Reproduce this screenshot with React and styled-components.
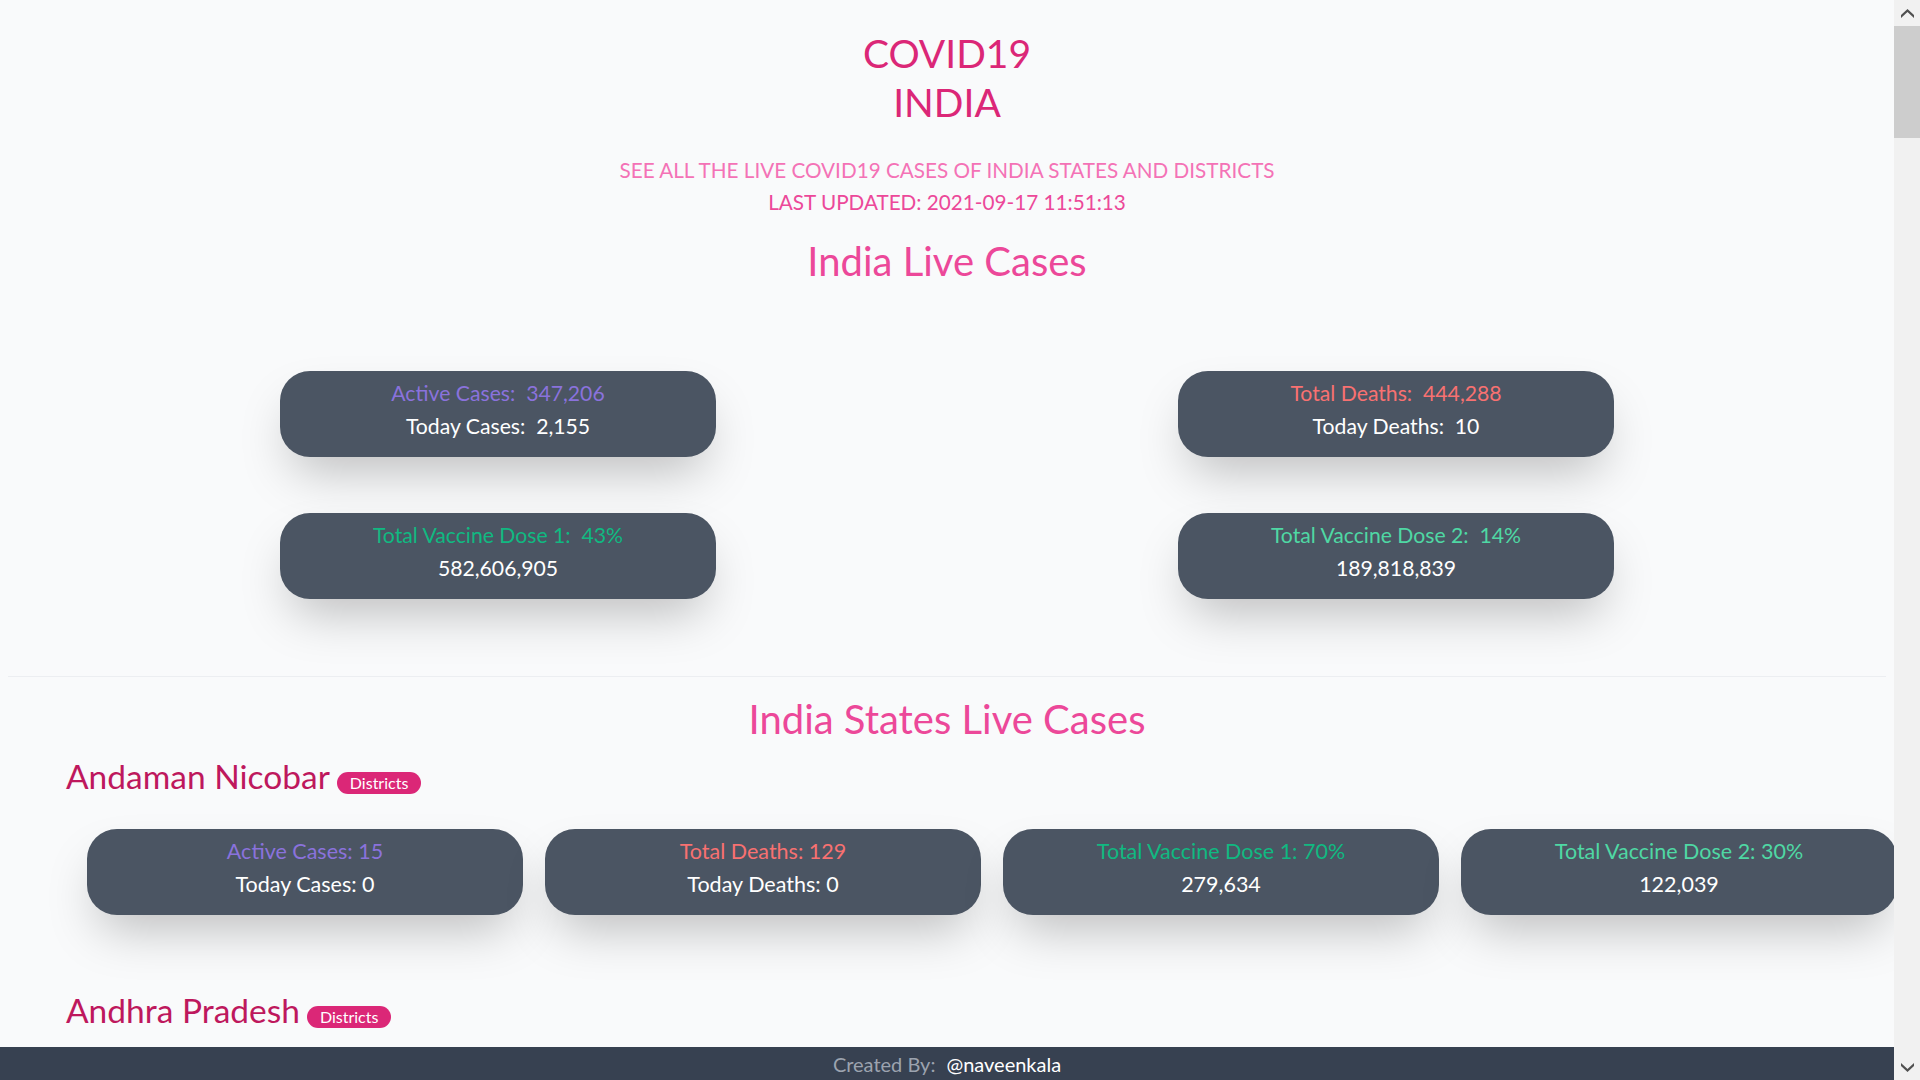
import React from "react";
import styled, { createGlobalStyle } from "styled-components";

const GlobalStyle = createGlobalStyle`
  html, body {
    margin: 0;
    padding: 0;
    height: 100%;
    overflow: hidden;
    background: #f9fafb;
    font-family: Lato, "Open Sans", sans-serif;
  }
  * { box-sizing: border-box; }
`;

const Shell = styled.div`
  display: flex;
  height: 100vh;
  width: 100vw;
`;

const Viewport = styled.div`
  flex: 1;
  min-width: 0;
  display: flex;
  flex-direction: column;
`;

const Scroller = styled.main`
  flex: 1;
  overflow: hidden;
  background: #f9fafb;
`;

const Header = styled.header`
  text-align: center;
  padding-top: 29px;
`;

const Title = styled.h1`
  margin: 0;
  font-size: 39px;
  line-height: 49px;
  font-weight: 400;
  color: #db2777;
`;

const Sub = styled.p`
  margin: 0;
  font-size: 20.7px;
  line-height: 32px;
  color: ${props => props.strong ? "#ec4899" : "#f472b6"};
`;

const SubBlock = styled.div`
  margin-top: 27px;
`;

const SectionTitle = styled.h2`
  margin: ${props => props.top || "0"} 0 0;
  text-align: center;
  font-size: 40px;
  line-height: 49px;
  font-weight: 400;
  color: #ec4899;
`;

const IndiaSection = styled.section`
  margin: 0 8px;
  padding-bottom: 77px;
  border-bottom: 1px solid #eceef1;
`;

const IndiaGrid = styled.div`
  display: grid;
  grid-template-columns: 1fr 1fr;
  justify-items: center;
  row-gap: 56px;
  margin-top: 85px;
  padding: 0 41px;
`;

const Card = styled.div`
  width: 436px;
  height: 86px;
  padding: 6px 0 14px;
  border-radius: 30px;
  background: #4b5563;
  box-shadow: 0 25px 50px -12px rgba(0, 0, 0, 0.25);
  text-align: center;
`;

const Line = styled.div`
  font-size: ${props => props.small ? "21.5px" : "21.2px"};
  line-height: 33px;
  white-space: pre;
  color: ${props => props.color || "#ffffff"};
`;

const StateBlock = styled.div`
  margin-top: ${props => props.first ? "10px" : "72.5px"};
`;

const StateName = styled.h3`
  margin: 0;
  padding-left: 66px;
  font-size: 33.5px;
  line-height: 45px;
  font-weight: 400;
  color: #be185d;
`;

const Badge = styled.span`
  display: inline-block;
  margin-left: 7px;
  padding: 0 13px;
  height: 22px;
  line-height: 22px;
  border-radius: 11px;
  background: #db2777;
  color: #ffffff;
  font-size: 16px;
`;

const StateRow = styled.div`
  display: grid;
  grid-template-columns: repeat(4, 436px);
  column-gap: 22px;
  margin-top: 30.5px;
  padding-left: 87px;
`;

const Footer = styled.footer`
  height: 33px;
  flex: none;
  display: flex;
  justify-content: center;
  align-items: center;
  gap: 11px;
  background: #374151;
  font-size: 20px;
  color: #9ca3af;
`;

const Handle = styled.span`
  color: #ffffff;
`;

const Track = styled.div`
  width: 26px;
  flex: none;
  display: flex;
  flex-direction: column;
  background: #f1f1f1;
`;

const Arrow = styled.div`
  height: 26px;
  display: flex;
  align-items: center;
  justify-content: center;
`;

const Thumb = styled.div`
  height: 112px;
  background: #cdcdcd;
`;

const Spacer = styled.div`
  flex: 1;
`;

const COLORS = {
  active: "#8a72dc",
  deaths: "#f87171",
  dose1: "#10b981",
  dose2: "#4fd8a4",
};

const india = [
  { color: COLORS.active, top: "Active Cases:  347,206", bottom: "Today Cases:  2,155" },
  { color: COLORS.deaths, top: "Total Deaths:  444,288", bottom: "Today Deaths:  10" },
  { color: COLORS.dose1, top: "Total Vaccine Dose 1:  43%", bottom: "582,606,905" },
  { color: COLORS.dose2, top: "Total Vaccine Dose 2:  14%", bottom: "189,818,839" },
];

// only the rows that are on screen carry their numbers
const states = [
  {
    name: "Andaman Nicobar",
    stats: {
      active: "15", today: "0", deaths: "129", todayDeaths: "0",
      dose1: "70%", dose1n: "279,634", dose2: "30%", dose2n: "122,039",
    },
  },
  { name: "Andhra Pradesh" },
];

const Stat = ({ color, top, bottom, small }) => (
  <Card>
    <Line color={color} small={small}>{top}</Line>
    <Line small={small}>{bottom}</Line>
  </Card>
);

const ArrowIcon = ({ down }) => (
  <svg width="13" height="9" viewBox="0 0 13 9">
    <polygon
      points={down ? "0,0 6.5,6 13,0 13,3 6.5,9 0,3" : "0,9 6.5,3 13,9 13,6 6.5,0 0,6"}
      fill="#505050"
    />
  </svg>
);

const App = () => {
  return (
    <Shell>
      <GlobalStyle />
      <Viewport>
        <Scroller>
          <IndiaSection>
            <Header>
              <Title>COVID19<br />INDIA</Title>
              <SubBlock>
                <Sub>SEE ALL THE LIVE COVID19 CASES OF INDIA STATES AND DISTRICTS</Sub>
                <Sub strong>LAST UPDATED: 2021-09-17 11:51:13</Sub>
              </SubBlock>
              <SectionTitle top="19px">India Live Cases</SectionTitle>
            </Header>
            <IndiaGrid>
              {india.map((v, i) => <Stat key={i} {...v} />)}
            </IndiaGrid>
          </IndiaSection>
          <SectionTitle top="17.5px">India States Live Cases</SectionTitle>
          {states.map((s, i) => (
            <StateBlock key={s.name} first={i === 0}>
              <StateName>{s.name}<Badge>Districts</Badge></StateName>
              {s.stats && (
                <StateRow>
                  <Stat small color={COLORS.active} top={`Active Cases: ${s.stats.active}`} bottom={`Today Cases: ${s.stats.today}`} />
                  <Stat small color={COLORS.deaths} top={`Total Deaths: ${s.stats.deaths}`} bottom={`Today Deaths: ${s.stats.todayDeaths}`} />
                  <Stat small color={COLORS.dose1} top={`Total Vaccine Dose 1: ${s.stats.dose1}`} bottom={s.stats.dose1n} />
                  <Stat small color={COLORS.dose2} top={`Total Vaccine Dose 2: ${s.stats.dose2}`} bottom={s.stats.dose2n} />
                </StateRow>
              )}
            </StateBlock>
          ))}
        </Scroller>
        <Footer>
          <span>Created By:</span>
          <Handle>@naveenkala</Handle>
        </Footer>
      </Viewport>
      <Track>
        <Arrow><ArrowIcon /></Arrow>
        <Thumb />
        <Spacer />
        <Arrow><ArrowIcon down /></Arrow>
      </Track>
    </Shell>
  );
};

export default App;
